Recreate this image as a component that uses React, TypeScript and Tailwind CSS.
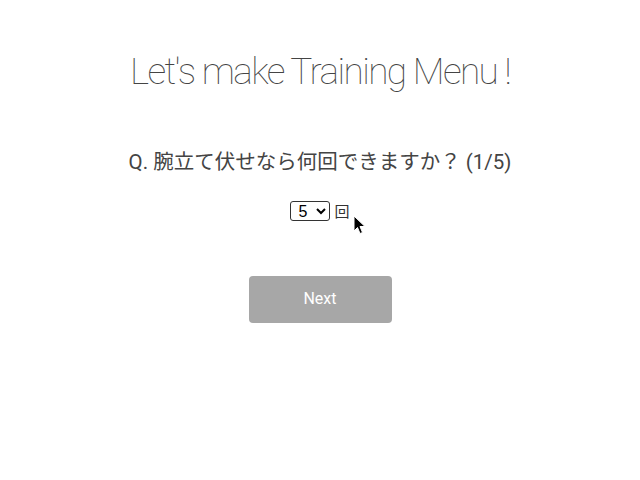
import React from "react";

export default function App() {
  return (
    <div className="relative w-[640px] h-[480px] bg-white flex flex-col items-center font-['Roboto','Noto_Sans_CJK_JP',sans-serif]">
      <h1 className="mt-[50px] text-[37px] leading-[44px] font-thin tracking-[-1.6px] text-[#444] font-['Roboto',sans-serif]">
        Let's make Training Menu !
      </h1>
      <p className="mt-[56px] text-[20.5px] leading-[24px] text-[#444]">
        Q. 腕立て伏せなら何回できますか？ (1/5)
      </p>
      <div className="mt-[26px] flex items-center gap-[4px] text-[15px] text-[#333]">
        <select
          defaultValue="5"
          className="h-[20px] w-[40px] border border-[#333] rounded-[3px] text-[16px] leading-[18px] pl-[3px] text-black bg-white font-['Liberation_Sans',sans-serif]"
        >
          <option value="1">1</option>
          <option value="2">2</option>
          <option value="3">3</option>
          <option value="4">4</option>
          <option value="5">5</option>
        </select>
        <span className="font-['Noto_Sans_CJK_JP',sans-serif]">回</span>
      </div>
      <button className="mt-[53px] w-[143px] h-[47px] rounded-[4px] bg-[#a7a7a7] text-white text-[16px]">
        Next
      </button>
      <svg className="absolute left-[353px] top-[215px]" width="13" height="20" viewBox="0 0 13 20">
        <path d="M1 1 L1 16 L4.5 12.5 L7 18.5 L9.5 17.5 L7 11.5 L12 11.5 Z" fill="black" stroke="white" strokeWidth="1" />
      </svg>
    </div>
  );
}
